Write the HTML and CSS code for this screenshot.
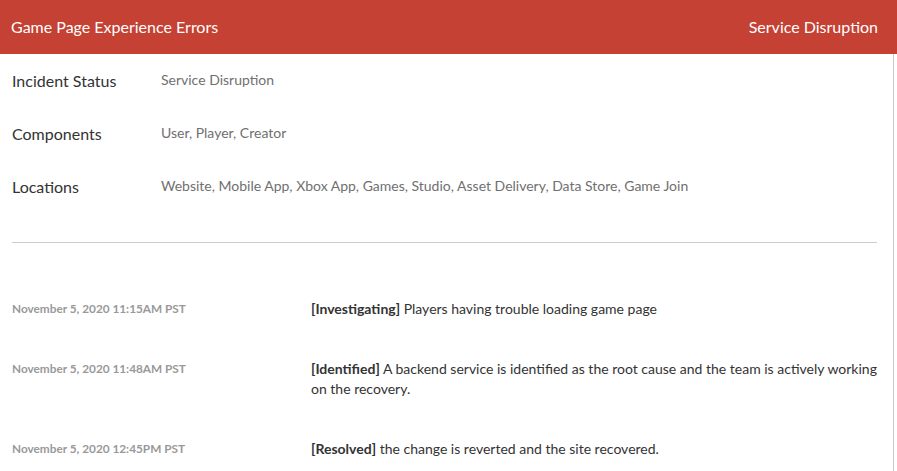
FILE: index.html
```html
<!DOCTYPE html>
<html>
<head>
<meta charset="utf-8">
<link rel="stylesheet" href="styles.css">
</head>
<body>
<div class="page">
  <header class="bar">
    <span class="bar-title">Game Page Experience Errors</span>
    <span class="bar-status">Service Disruption</span>
  </header>
  <main class="card">
    <section class="details">
      <div class="row"><div class="label">Incident Status</div><div class="value">Service Disruption</div></div>
      <div class="row"><div class="label">Components</div><div class="value">User, Player, Creator</div></div>
      <div class="row"><div class="label">Locations</div><div class="value">Website, Mobile App, Xbox App, Games, Studio, Asset Delivery, Data Store, Game Join</div></div>
    </section>
    <hr class="divider">
    <section class="updates">
      <div class="update">
        <div class="date">November 5, 2020 11:15AM PST</div>
        <div class="msg"><b>[Investigating]</b> Players having trouble loading game page</div>
      </div>
      <div class="update">
        <div class="date">November 5, 2020 11:48AM PST</div>
        <div class="msg"><b>[Identified]</b> A backend service is identified as the root cause and the team is actively working on the recovery.</div>
      </div>
      <div class="update">
        <div class="date">November 5, 2020 12:45PM PST</div>
        <div class="msg"><b>[Resolved]</b> the change is reverted and the site recovered.</div>
      </div>
    </section>
  </main>
</div>
</body>
</html>
```
FILE: styles.css
```css
html, body {
  margin: 0;
  padding: 0;
  background: #fff;
  font-family: Lato, "Open Sans", sans-serif;
}
.page {
  width: 897px;
}
.bar {
  height: 54px;
  background: #c44133;
  color: #fff;
  display: flex;
  align-items: center;
  justify-content: space-between;
  padding: 0 19px 0 11px;
  box-sizing: border-box;
  font-size: 16px;
  line-height: 20px;
}
.card {
  width: 894px;
  box-sizing: border-box;
  border-right: 1px solid #cccccc;
  padding: 16px 16px 0 12px;
}
.details {
  display: flex;
  flex-direction: column;
  gap: 31px;
}
.row {
  display: grid;
  grid-template-columns: 149px 1fr;
}
.label {
  font-size: 16px;
  line-height: 22px;
  color: #333;
}
.value {
  font-size: 14px;
  line-height: 20px;
  color: #707070;
}
.divider {
  border: 0;
  border-top: 1px solid #cccccc;
  margin: 44px 0 36px 0;
}
.updates {
  display: flex;
  flex-direction: column;
}
.update {
  display: grid;
  grid-template-columns: 299px 1fr;
  padding: 20px 0;
}
.date {
  font-size: 11.8px;
  font-weight: bold;
  line-height: 20px;
  color: #999;
}
.msg {
  font-size: 14px;
  line-height: 20px;
  color: #333;
}
.msg b {
  font-weight: bold;
}
```
